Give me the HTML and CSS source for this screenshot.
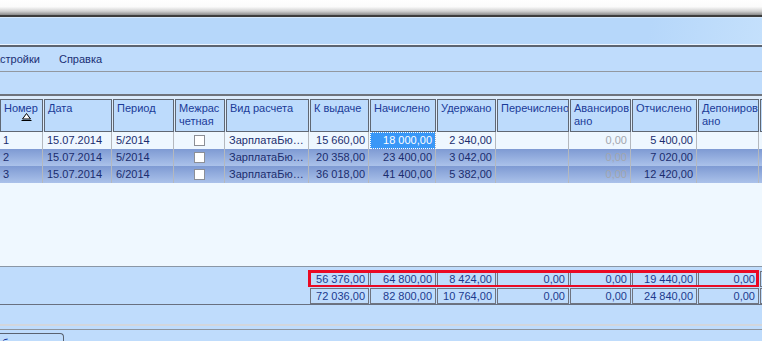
FILE: index.html
```html
<!DOCTYPE html>
<html lang="ru">
<head>
  <meta charset="UTF-8">
  <title>Расчетные ведомости</title>
  <link rel="stylesheet" href="styles.css">
</head>
<body>

  <div class="caption"></div>
  <div class="ribbon"></div>

  <div class="menu">
    <span class="menu-item first">Настройки</span>
    <span class="menu-item">Справка</span>
  </div>
  <div class="toolbar"></div>

  <div class="grid">
    <div class="head row">
      <div class="hc">Номер
        <svg class="sort-mark" width="11" height="8" viewBox="0 0 11 8">
          <polygon points="5.5,0.5 1.5,6 9.5,6" fill="#fff" stroke="#000" stroke-width="1"/>
          <line x1="0.5" y1="7.5" x2="10.5" y2="7.5" stroke="#000" stroke-width="1"/>
        </svg>
      </div>
      <div class="hc">Дата</div>
      <div class="hc">Период</div>
      <div class="hc">Межрас<br>четная</div>
      <div class="hc">Вид расчета</div>
      <div class="hc">К выдаче</div>
      <div class="hc">Начислено</div>
      <div class="hc">Удержано</div>
      <div class="hc">Перечислено</div>
      <div class="hc">Авансиров<br>ано</div>
      <div class="hc">Отчислено</div>
      <div class="hc">Депониров<br>ано</div>
      <div class="hc"></div>
    </div>

    <div class="body">
      <div class="row data">
        <div class="c">1</div>
        <div class="c">15.07.2014</div>
        <div class="c">5/2014</div>
        <div class="c check"><span class="box"></span></div>
        <div class="c">ЗарплатаБю…</div>
        <div class="c num">15 660,00</div>
        <div class="c num focus">18 000,00</div>
        <div class="c num">2 340,00</div>
        <div class="c num"></div>
        <div class="c num dim">0,00</div>
        <div class="c num">5 400,00</div>
        <div class="c num"></div>
        <div class="c"></div>
      </div>
      <div class="row data sel">
        <div class="c">2</div>
        <div class="c">15.07.2014</div>
        <div class="c">5/2014</div>
        <div class="c check"><span class="box"></span></div>
        <div class="c">ЗарплатаБю…</div>
        <div class="c num">20 358,00</div>
        <div class="c num">23 400,00</div>
        <div class="c num">3 042,00</div>
        <div class="c num"></div>
        <div class="c num dim">0,00</div>
        <div class="c num">7 020,00</div>
        <div class="c num"></div>
        <div class="c"></div>
      </div>
      <div class="row data sel">
        <div class="c">3</div>
        <div class="c">15.07.2014</div>
        <div class="c">6/2014</div>
        <div class="c check"><span class="box"></span></div>
        <div class="c">ЗарплатаБю…</div>
        <div class="c num">36 018,00</div>
        <div class="c num">41 400,00</div>
        <div class="c num">5 382,00</div>
        <div class="c num"></div>
        <div class="c num dim">0,00</div>
        <div class="c num">12 420,00</div>
        <div class="c num"></div>
        <div class="c"></div>
      </div>
    </div>

    <div class="footer">
      <div class="row foot">
        <div class="spacer"></div>
        <div class="fc">56 376,00</div>
        <div class="fc">64 800,00</div>
        <div class="fc">8 424,00</div>
        <div class="fc">0,00</div>
        <div class="fc">0,00</div>
        <div class="fc">19 440,00</div>
        <div class="fc">0,00</div>
        <div class="fc"></div>
      </div>
      <div class="row foot">
        <div class="spacer"></div>
        <div class="fc">72 036,00</div>
        <div class="fc">82 800,00</div>
        <div class="fc">10 764,00</div>
        <div class="fc">0,00</div>
        <div class="fc">0,00</div>
        <div class="fc">24 840,00</div>
        <div class="fc">0,00</div>
        <div class="fc"></div>
      </div>
      <div class="highlight"></div>
    </div>
  </div>

  <div class="status"></div>
  <div class="tabs-line"></div>
  <div class="tabs">
    <div class="tab">бюджет</div>
  </div>

</body>
</html>
```

FILE: styles.css
```css
body {
  margin: 0;
  width: 762px;
  height: 341px;
  overflow: hidden;
  font-family: Tahoma, "Liberation Sans", Arial, sans-serif;
  font-size: 11px;
  color: #1b2d6e;
  background: #bfdcfc;
}

.caption {
  height: 15px;
  background: linear-gradient(#ffffff 0%, #fbfbfb 45%, #d0d0d0 75%, #8a8a8a 100%);
  border-bottom: 2px solid #3c3c3c;
}

.ribbon {
  height: 26px;
  background: linear-gradient(100deg, #b6d7fa 85%, #c4e0fc 100%);
  border-top: 1px solid #d4e8fc;
  border-bottom: 1px solid #eaf4ff;
}

.menu {
  display: flex;
  height: 24px;
  align-items: center;
  border-top: 2px solid #5c6470;
  border-bottom: 1px solid #9298a0;
  background: #bfdcfc;
  overflow: hidden;
  color: #1a2f74;
}

.menu-item {
  padding-right: 19px;
}

.menu-item.first {
  margin-left: -14px;
}

.toolbar {
  height: 22px;
  background: #bfdcfc;
  border-bottom: 2px solid #6e737c;
}

.grid {
  overflow: hidden;
}

.row {
  display: grid;
  grid-template-columns: 44px 69px 62px 51px 84px 60px 67px 60px 73px 62px 66px 62px 60px;
  width: 820px;
}

.head {
  padding-top: 3px;
  background: #dcebfb;
}

.hc {
  position: relative;
  height: 33px;
  box-sizing: border-box;
  margin-right: 1px;
  padding: 2px 2px 0 3px;
  line-height: 13px;
  border: 1px solid #5f6773;
  background: #bddbfc;
  color: #1a3a98;
  white-space: nowrap;
  overflow: hidden;
}

.sort-mark {
  position: absolute;
  left: 20px;
  top: 13px;
}

.body {
  height: 134px;
  background: #eff8ff;
}

.data {
  height: 17px;
  line-height: 17px;
  background: #eef7ff;
}

.data.sel {
  background: linear-gradient(#7e9ad3, #abc2ea);
}

.c {
  margin-right: 1px;
  padding: 0 3px;
  border-right: 1px solid #b4b8be;
  white-space: nowrap;
  overflow: hidden;
}

.num {
  text-align: right;
}

.dim {
  color: #a2a6ae;
}

.focus {
  background: #3997f7;
  color: #fff;
  outline: 1px dotted #ffffff;
  outline-offset: -1px;
}

.check {
  display: flex;
  align-items: center;
  justify-content: center;
}

.box {
  width: 9px;
  height: 9px;
  background: #fff;
  border: 1px solid #8c8f96;
}

.footer {
  position: relative;
  height: 33px;
  padding-top: 4px;
  border-top: 1px solid #8a97a6;
  border-bottom: 1px solid #687080;
  background: #bfdcfc;
}

.foot {
  margin-bottom: 1px;
}

.spacer {
  grid-column: 1 / 6;
}

.fc {
  height: 16px;
  box-sizing: border-box;
  margin-right: 1px;
  padding: 0 3px;
  line-height: 14px;
  text-align: right;
  border: 1px solid #6f7480;
  color: #1c3a8e;
  white-space: nowrap;
}

.highlight {
  position: absolute;
  left: 308px;
  top: 3px;
  width: 451px;
  height: 17px;
  box-sizing: border-box;
  border: 3px solid #ea0a24;
  border-bottom-width: 2px;
}

.status {
  height: 19px;
  background: #bfdcfc;
}

.tabs-line {
  height: 3px;
  border-top: 2px solid #d2d6dc;
  border-bottom: 1px solid #8e949c;
  background: #bfdcfc;
}

.tabs {
  padding-top: 3px;
  background: #bfdcfc;
}

.tab {
  width: 61px;
  height: 12px;
  padding: 3px 0 0 2px;
  border: 1px solid #5a6270;
  border-left: none;
  border-bottom: none;
  border-radius: 0 4px 0 0;
  color: #1a3a98;
  line-height: 12px;
}
```
